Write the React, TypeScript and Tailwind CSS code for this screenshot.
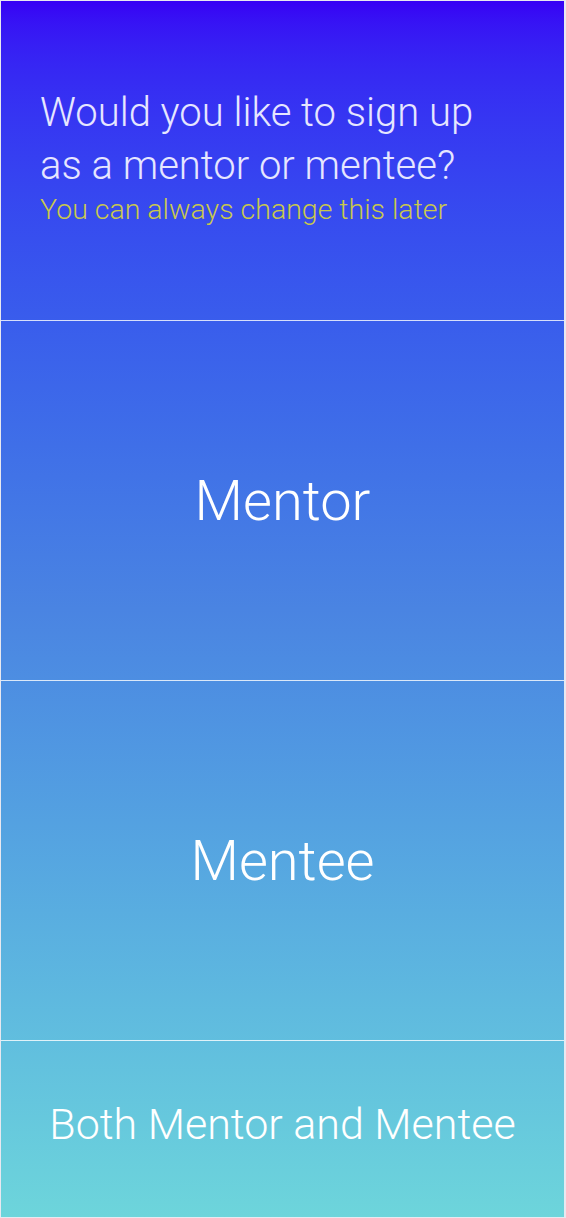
// Role picker - choose mentor / mentee signup
import React from "react";

const options = ["Mentor", "Mentee"];

export default function App() {
  return (
    <div
      className="w-[566px] h-[1218px] flex flex-col border-t border-l border-b border-r-2 border-[#e8e8f0] bg-gradient-to-b from-[#3700f5] via-[#4a84e2] to-[#6dd5db] text-white"
      style={{ fontFamily: "Roboto, 'Helvetica Neue', Arial, sans-serif" }}
    >
      {/* Question header */}
      <div className="h-[320px] shrink-0 border-b border-white/80 pl-[39px] pt-[85px]">
        <h1 className="text-[40px] leading-[53px] font-light text-[#e6e6ff]">
          Would you like to sign up
          <br />
          as a mentor or mentee?
        </h1>
        <p className="text-[28.5px] leading-[32px] font-light text-[#c9c84c] mt-[2px]">
          You can always change this later
        </p>
      </div>

      {/* Choices */}
      {options.map((label) => (
        <button
          key={label}
          className="h-[360px] shrink-0 border-b border-white/80 flex items-center justify-center text-[56px] font-light"
        >
          {label}
        </button>
      ))}
      <button className="flex-1 flex items-center justify-center text-[43px] font-light pb-[10px]">
        Both Mentor and Mentee
      </button>
    </div>
  );
}
